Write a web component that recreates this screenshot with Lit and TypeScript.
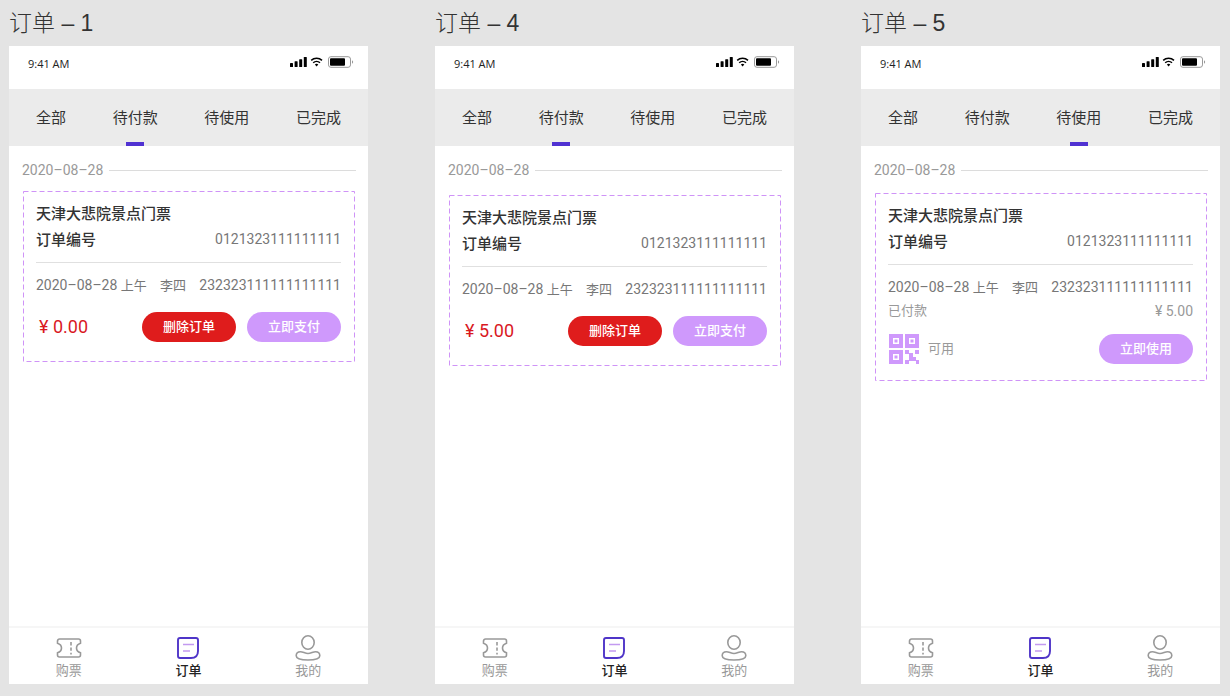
import { LitElement, html, css, svg, nothing } from "lit";
import { customElement, property } from "lit/decorators.js";

interface Order {
  id: string;
  board: string;
  activeTab: number;
  offset: "near" | "middle" | "far";
  price: string;
  paid: boolean;
}

const TABS = ["全部", "待付款", "待使用", "已完成"];

const ORDERS: Order[] = [
  { id: "a", board: "订单 – 1", activeTab: 1, offset: "near", price: "0.00", paid: false },
  { id: "b", board: "订单 – 4", activeTab: 1, offset: "far", price: "5.00", paid: false },
  { id: "c", board: "订单 – 5", activeTab: 2, offset: "middle", price: "5.00", paid: true },
];

const FONT = css`Roboto, "Noto Sans CJK SC", sans-serif`;

@customElement("status-bar")
class StatusBar extends LitElement {
  static styles = css`
    :host {
      display: flex;
      justify-content: space-between;
      align-items: flex-start;
      height: 43px;
      box-sizing: border-box;
      padding: 10px 14px 0 19px;
      font: 11px/16px "Open Sans", "Noto Sans", sans-serif;
      color: #222;
    }
    .icons {
      display: block;
    }
  `;
  render() {
    return html`
      <span>9:41 AM</span>
      <svg class="icons" width="64" height="12" viewBox="0 0 64 12" aria-hidden="true">
        <g fill="#000">
          <rect x="0" y="7" width="3" height="4" rx="0.6" />
          <rect x="4.6" y="5.2" width="3" height="5.8" rx="0.6" />
          <rect x="9.2" y="3.2" width="3" height="7.8" rx="0.6" />
          <rect x="13.8" y="1" width="3" height="10" rx="0.6" />
        </g>
        <g fill="none" stroke="#000" stroke-width="1.5">
          <path d="M21.2 4.4a8 8 0 0 1 10.8 0" />
          <path d="M23.2 6.8a5 5 0 0 1 6.8 0" />
        </g>
        <path d="M24.9 8.5a2.6 2.6 0 0 1 3.4 0l-1.7 2z" fill="#000" />
        <rect x="38.5" y="0.7" width="22" height="10.6" rx="2.4" fill="none" stroke="#999" />
        <rect x="40" y="2.2" width="15" height="7.6" rx="1" fill="#000" />
        <path d="M62 4.2v3.6a2 2 0 0 0 0-3.6z" fill="#999" />
      </svg>
    `;
  }
}

@customElement("order-card")
class OrderCard extends LitElement {
  @property({ attribute: false }) order!: Order;

  static styles = css`
    :host {
      display: block;
      position: relative;
      padding: 10px 14px 16px 13px;
      font: 14px/24px ${FONT};
      color: #777;
    }
    .outline {
      position: absolute;
      inset: 0;
      width: 100%;
      height: 100%;
      pointer-events: none;
    }
    .outline rect {
      width: calc(100% - 1px);
      height: calc(100% - 1px);
      fill: none;
      stroke: #cf93f7;
      stroke-dasharray: 5 3;
    }
    .row {
      display: flex;
      justify-content: space-between;
      align-items: center;
    }
    .number {
      align-items: flex-start;
    }
    .title {
      margin: 0;
      font-size: 15px;
      line-height: 26px;
      font-weight: 500;
      color: #333;
    }
    .rule {
      height: 1px;
      margin: 9px 0 10px;
      border: 0;
      background: #e0e0e0;
    }
    .cjk {
      font-size: 13px;
    }
    .visit {
      align-items: baseline;
      height: 24px;
      white-space: nowrap;
    }
    .paid {
      height: 24px;
      font-size: 13px;
      color: #999;
    }
    .amount {
      font-size: 14px;
    }
    .actions {
      margin: 14px 0 3px;
      min-height: 32px;
      gap: 11px;
    }
    .compact {
      margin: 10px 0 0;
    }
    .price {
      flex: 1;
      padding-left: 3px;
      font-size: 18px;
      color: #d9191f;
    }
    .code {
      flex: 1;
      display: flex;
      align-items: center;
      gap: 9px;
      padding-left: 1px;
      font-size: 13px;
      color: #999;
    }
    .button {
      width: 94px;
      height: 30px;
      padding: 0;
      border: 0;
      border-radius: 15px;
      font: 500 13px/30px ${FONT};
      color: #fff;
      background: #cf99fc;
    }
    .danger {
      background: #df1c1c;
    }
  `;

  private qr() {
    return svg`<svg width="30" height="30" viewBox="0 0 30 30" aria-hidden="true">
      <path fill="#cf99fc" fill-rule="evenodd" d="M0 0h14v14H0zM4 4v6h6V4zM5.500 5.500h3v3h-3z
        M16 0h14v14H16zM20 4v6h6V4zM21.500 5.500h3v3h-3z
        M0 16h14v14H0zM4 20v6h6v-6zM5.500 21.500h3v3h-3z" />
      <path fill="#cf99fc" d="M16 16h4v4h-4zM26 16h4v4h-4zM20 19h4v4h3v4h-4v-3h-3zM16 26h4v4h-4zM20 23h3v4h-3zM27 26h3v4h-3z" />
    </svg>`;
  }

  render() {
    const { paid, price } = this.order;
    return html`
      <svg class="outline" aria-hidden="true">
        <rect x="0.5" y="0.5" />
      </svg>
      <h2 class="title">天津大悲院景点门票</h2>
      <div class="row number">
        <h3 class="title">订单编号</h3>
        <span>0121323111111111</span>
      </div>
      <hr class="rule" />
      <div class="row visit">
        <span>2020–08–28 <span class="cjk">上午</span></span>
        <span class="cjk">李四</span>
        <span>232323111111111111</span>
      </div>
      ${paid
        ? html`<div class="row paid"><span>已付款</span><span class="amount">¥ ${price}</span></div>`
        : nothing}
      <div class="row actions ${paid ? "compact" : ""}">
        ${paid
          ? html`<span class="code">${this.qr()}可用</span>
              <button class="button">立即使用</button>`
          : html`<span class="price">¥ ${price}</span>
              <button class="button danger">删除订单</button>
              <button class="button">立即支付</button>`}
      </div>
    `;
  }
}

@customElement("bottom-nav")
class BottomNav extends LitElement {
  static styles = css`
    :host {
      display: block;
      border-top: 2px solid #f6f6f6;
      font: 13px/18px ${FONT};
    }
    .nav {
      display: grid;
      grid-template-columns: repeat(3, 1fr);
      padding-top: 6px;
      height: 50px;
    }
    .item {
      display: flex;
      flex-direction: column;
      align-items: center;
      color: #999;
      text-decoration: none;
    }
    .current {
      color: #222;
      font-weight: 500;
    }
    .icon {
      display: block;
      fill: none;
      stroke: #999;
      stroke-width: 1.6;
    }
  `;
  render() {
    return html`
      <nav class="nav">
        <a class="item" href="#tickets">
          <svg class="icon" width="28" height="28" viewBox="0 0 28 28" aria-hidden="true">
            <path d="M4.500 5h19a2 2 0 0 1 2 2v2.200c-2.500.8-4 2.400-4 4.800s1.500 4 4 4.800V21a2 2 0 0 1-2 2h-19a2 2 0 0 1-2-2v-2.200c2.500-.8 4-2.400 4-4.800s-1.500-4-4-4.800V7a2 2 0 0 1 2-2z" />
            <path d="M16 8v12.500" stroke-dasharray="3.400 2" />
          </svg>
          购票
        </a>
        <a class="item current" href="#orders" aria-current="page">
          <svg class="icon" width="28" height="28" viewBox="0 0 28 28" aria-hidden="true">
            <path d="M6 4h16a2 2 0 0 1 2 2v11c0 4.500-2.500 7-7 7H6a2 2 0 0 1-2-2V6a2 2 0 0 1 2-2z" stroke="#4f35c8" stroke-width="1.900" />
            <path d="M9 10.500h11M9 17h7" stroke="#c39af0" stroke-width="1.500" />
          </svg>
          订单
        </a>
        <a class="item" href="#me">
          <svg class="icon" width="28" height="28" viewBox="0 0 28 28" aria-hidden="true">
            <ellipse cx="14" cy="8.500" rx="6.200" ry="6.700" />
            <path d="M6.500 17.800c2.600 0 4.500 1.700 7.500 1.700s4.900-1.700 7.500-1.700c2.600 0 4.300 1.700 4.300 4 0 2.800-2.600 4.200-11.800 4.200s-11.800-1.400-11.800-4.200c0-2.300 1.700-4 4.300-4z" />
          </svg>
          我的
        </a>
      </nav>
    `;
  }
}

@customElement("order-screen")
class OrderScreen extends LitElement {
  @property({ attribute: false }) order!: Order;

  static styles = css`
    :host {
      display: flex;
      flex-direction: column;
      min-width: 0;
    }
    .board {
      margin: 0;
      height: 46px;
      font: 300 23px/46px "Liberation Sans", "Noto Sans CJK SC", sans-serif;
      color: #333;
    }
    .phone {
      flex: 1;
      display: flex;
      flex-direction: column;
      background: #fff;
    }
    .tabs {
      display: flex;
      justify-content: space-between;
      height: 57px;
      padding: 0 27px;
      background: #ebebeb;
    }
    .tab {
      position: relative;
      padding: 2px 0 0;
      border: 0;
      background: none;
      font: 15px/55px ${FONT};
      color: #333;
    }
    .active::after {
      content: "";
      position: absolute;
      left: 50%;
      bottom: 0;
      width: 18px;
      height: 4px;
      margin-left: -9px;
      background: #5032d2;
    }
    .orders {
      flex: 1;
      padding: 12px 12px 0 13px;
    }
    .date {
      display: flex;
      align-items: center;
      gap: 6px;
      margin: 0;
      font: 14px/24px ${FONT};
      color: #999;
    }
    .date::after {
      content: "";
      flex: 1;
      height: 1px;
      background: #dcdcdc;
    }
    .near {
      margin: 9px 1px 0;
    }
    .middle {
      margin: 11px 1px 0;
    }
    .far {
      margin: 13px 1px 0;
    }
  `;
  render() {
    const o = this.order;
    return html`
      <h1 class="board">${o.board}</h1>
      <section class="phone">
        <status-bar></status-bar>
        <div class="tabs" role="tablist">
          ${TABS.map(
            (t, i) => html`<button
              class="tab ${i === o.activeTab ? "active" : ""}"
              role="tab"
              aria-selected=${i === o.activeTab}
            >${t}</button>`
          )}
        </div>
        <div class="orders">
          <p class="date">2020–08–28</p>
          <order-card class=${o.offset} .order=${o}></order-card>
        </div>
        <bottom-nav></bottom-nav>
      </section>
    `;
  }
}

@customElement("app-root")
class AppRoot extends LitElement {
  static styles = css`
    :host {
      display: grid;
      grid-template-columns: repeat(3, minmax(0, 1fr));
      gap: 67px;
      box-sizing: border-box;
      min-height: 100vh;
      padding: 0 10px 12px 9px;
      background: #e4e4e4;
    }
  `;
  render() {
    return ORDERS.map((o) => html`<order-screen .order=${o}></order-screen>`);
  }
}
